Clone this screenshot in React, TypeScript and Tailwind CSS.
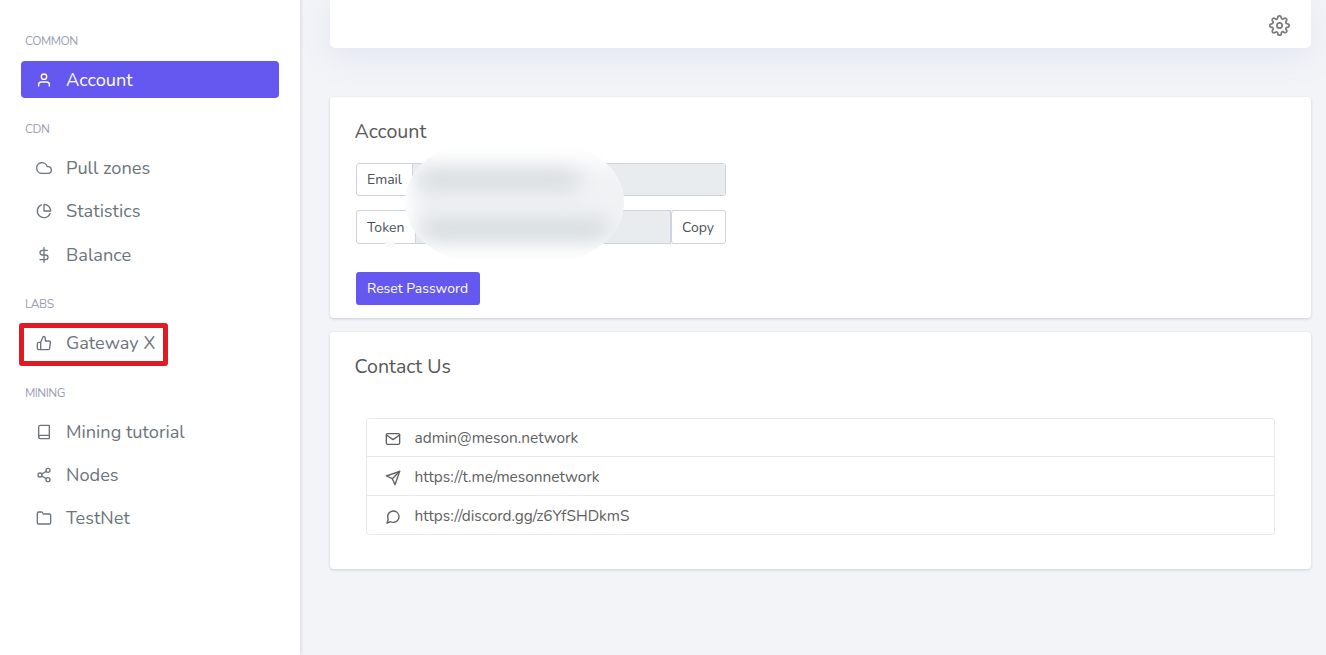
import type { ReactNode } from 'react';
import type { IconType } from 'react-icons';
import {
  FiBook,
  FiCloud,
  FiDollarSign,
  FiFolder,
  FiMail,
  FiMessageCircle,
  FiPieChart,
  FiSend,
  FiSettings,
  FiShare2,
  FiThumbsUp,
  FiUser,
} from 'react-icons/fi';

type NavEntry = { label: string; icon: IconType; active?: boolean; marked?: boolean };

const sections: { title: string; items: NavEntry[] }[] = [
  { title: 'COMMON', items: [{ label: 'Account', icon: FiUser, active: true }] },
  {
    title: 'CDN',
    items: [
      { label: 'Pull zones', icon: FiCloud },
      { label: 'Statistics', icon: FiPieChart },
      { label: 'Balance', icon: FiDollarSign },
    ],
  },
  { title: 'LABS', items: [{ label: 'Gateway X', icon: FiThumbsUp, marked: true }] },
  {
    title: 'MINING',
    items: [
      { label: 'Mining tutorial', icon: FiBook },
      { label: 'Nodes', icon: FiShare2 },
      { label: 'TestNet', icon: FiFolder },
    ],
  },
];

const contacts: { text: string; icon: IconType }[] = [
  { text: 'admin@meson.network', icon: FiMail },
  { text: 'https://t.me/mesonnetwork', icon: FiSend },
  { text: 'https://discord.gg/z6YfSHDkmS', icon: FiMessageCircle },
];

function NavItem({ label, icon: Icon, active, marked }: NavEntry) {
  return (
    <a
      className={
        active
          ? 'relative flex h-[37px] items-center rounded-[4px] bg-[#6558f0] pl-[15px] text-white'
          : 'relative flex h-[37px] items-center rounded-[4px] pl-[15px] text-[#6c757d]'
      }
    >
      <Icon className="mr-3.5 size-4 shrink-0" strokeWidth={2} />
      <span className="pt-px text-[18.2px] leading-[27px]">{label}</span>
      {marked && (
        <span className="absolute -left-0.5 -top-[1.6px] h-[43px] w-[149px] rounded-[3px] border-[5px] border-[#e11b24]" />
      )}
    </a>
  );
}

function Sidebar() {
  return (
    <aside className="flex w-[300px] shrink-0 flex-col gap-[19.6px] bg-white px-[21px] pt-[29px] shadow-[1px_0_3px_rgba(60,64,80,0.14)]">
      {sections.map((section) => (
        <section key={section.title} className="flex flex-col gap-2">
          <h6 className="h-6 pl-1 pt-[0.6px] text-[12px] leading-[23px] tracking-[-0.5px] text-[#9a9eb4]">
            {section.title}
          </h6>
          <div className="flex flex-col gap-[6.3px]">
            {section.items.map((item) => (
              <NavItem key={item.label} {...item} />
            ))}
          </div>
        </section>
      ))}
    </aside>
  );
}

function Card({ title, className, children }: { title: string; className: string; children: ReactNode }) {
  return (
    <section className={`rounded bg-white px-[25px] pt-5 shadow-[0_1px_3px_rgba(60,64,80,0.2)] ${className}`}>
      <h4 className="-ml-[0.5px] text-[19.6px] leading-[29px] text-[#585858]">{title}</h4>
      {children}
    </section>
  );
}

function Redaction() {
  return (
    <div className="absolute -top-[23px] left-[49px] h-[124px] w-[219px] overflow-hidden rounded-[80px/62px] bg-white">
      <div className="absolute left-2 top-6 h-[78px] w-[230px] bg-[#f0f2f4] blur-[10px]" />
      <div className="absolute left-3 top-[30px] h-[20px] w-[162px] rounded-full bg-[#d6dbde] blur-[10px]" />
      <div className="absolute left-4 top-[79px] h-[21px] w-[188px] rounded-full bg-[#d4dadd] blur-[10px]" />
    </div>
  );
}

export default function App() {
  return (
    <div className="flex h-[655px] overflow-hidden bg-[#f3f4f8] font-['Nunito','Open_Sans',sans-serif] text-sm">
      <Sidebar />
      <main className="flex-1 pl-[30px] pr-[15px]">
        <header className="flex h-12 items-center justify-end rounded-b-[5px] bg-white pr-[21px] pt-[3px] shadow-[0_8px_36px_rgba(80,110,190,0.1)]">
          <FiSettings className="size-[21px] text-[#7c7c7c]" strokeWidth={2} />
        </header>

        <Card title="Account" className="mt-[49px] h-[221px]">
          <div className="relative ml-px mt-[17px] w-[370px] text-[#495057]">
            <div className="flex h-[33px] rounded-[3px] border border-[#d0d3dd]">
              <span className="flex w-14 items-center border-r border-[#d0d3dd] pl-2.5">Email</span>
              <span className="flex-1 rounded-r-[2px] bg-[#e8ecef]" />
            </div>
            <div className="mt-3.5 flex h-[34px]">
              <span className="flex w-[60px] items-center rounded-l-[3px] border border-[#d0d3dd] pl-2.5 pt-px">Token</span>
              <span className="-ml-px flex-1 border border-[#d0d3dd] bg-[#e8ecef]" />
              <button className="w-[55px] rounded-[3px] border border-[#d0d3dd] bg-white pr-px pt-px">Copy</button>
            </div>
            <Redaction />
            <svg className="absolute left-7 top-[76px] h-3 w-3" viewBox="0 0 12 12">
              <path d="M6 10 C3 7.500 1 5.500 1 3.500 C1 1.500 4.500 1.500 6 3.500 C7.500 1.500 11 1.500 11 3.500 C11 5.500 9 7.500 6 10Z" fill="#f8f9f9" />
            </svg>
          </div>
          <button className="ml-px mt-7 h-[33px] w-[124px] rounded-[3px] bg-[#6558f0] pr-px text-white">
            Reset Password
          </button>
        </Card>

        <Card title="Contact Us" className="mt-3.5 h-[237px]">
          <ul className="mx-[11px] mt-[37px] divide-y divide-[#e9e9eb] rounded-[3px] border border-[#e9e9eb] text-[15.4px] text-[#606060]">
            {contacts.map(({ text, icon: Icon }) => (
              <li key={text} className="flex h-[39px] items-center pl-[18px] first:h-[38px] last:h-[38px]">
                <Icon className="mr-[13.5px] mt-[3px] size-4" strokeWidth={2} />
                <span className="pt-px">{text}</span>
              </li>
            ))}
          </ul>
        </Card>
      </main>
    </div>
  );
}
